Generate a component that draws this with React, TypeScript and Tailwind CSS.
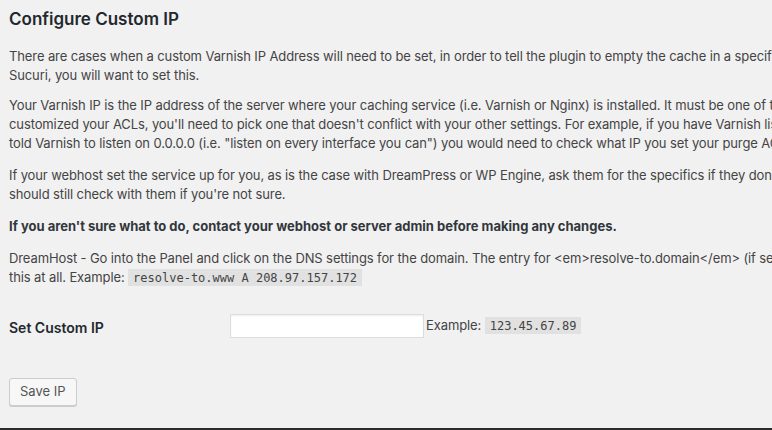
import React from "react";

const Line = ({ children }: { children: React.ReactNode }) => (
  <div className="whitespace-nowrap">{children}</div>
);

export default function App() {
  return (
    <div
      className="h-[430px] w-[772px] overflow-hidden bg-[#f1f1f1] border-b-2 border-[#2b2b2b] text-[13px] leading-[19px] tracking-[-0.11px] text-[#444]"
      style={{ fontFamily: "Inter, 'Noto Sans', Arial, sans-serif" }}
    >
      <div className="pl-[9px] pt-[7px]">
        <h2 className="text-[17px] leading-[24px] font-semibold tracking-normal text-[#23282d] whitespace-nowrap">
          Configure Custom IP
        </h2>

        <div className="mt-[16px] flex flex-col gap-[13px]">
          <div>
            <Line>
              There are cases when a custom Varnish IP Address will need to be set, in order to tell the plugin to empty the cache in a specific location. If you're using a CDN like Cloudflare or a Firewall Proxy like
            </Line>
            <Line>Sucuri, you will want to set this.</Line>
          </div>
          <div className="-mt-[2px]">
            <Line>
              Your Varnish IP is the IP address of the server where your caching service (i.e. Varnish or Nginx) is installed. It must be one of the addresses used by your cache service. If you use multiple IPs, or have
            </Line>
            <Line>
              customized your ACLs, you'll need to pick one that doesn't conflict with your other settings. For example, if you have Varnish listening on a public and private IP, you'll want to pick the private. On the other hand, if you
            </Line>
            <Line>
              told Varnish to listen on 0.0.0.0 (i.e. "listen on every interface you can") you would need to check what IP you set your purge ACL to allow (commonly 127.0.0.1 aka localhost), and use that (i.e. 127.0.0.1 or localhost).
            </Line>
          </div>
          <div>
            <Line>
              If your webhost set the service up for you, as is the case with DreamPress or WP Engine, ask them for the specifics if they don't have it documented. I've listed the ones I know about here, however you
            </Line>
            <Line>should still check with them if you're not sure.</Line>
          </div>
          <div className="font-bold tracking-normal text-[#32373c]">
            <Line>
              If you aren't sure what to do, contact your webhost or server admin before making any changes.
            </Line>
          </div>
          <div>
            <Line>
              DreamHost - Go into the Panel and click on the DNS settings for the domain. The entry for &lt;em&gt;resolve-to.domain&lt;/em&gt; (if set) will your cache server. If it's not set, then you don't need to worry about
            </Line>
            <Line>
              this at all. Example:{" "}
              <code
                className="bg-[#e1e1e1] px-[5px] pt-[2px] pb-[1px] text-[12px] tracking-normal"
                style={{ fontFamily: "'DejaVu Sans Mono', 'Liberation Mono', monospace" }}
              >
                resolve-to.www A 208.97.157.172
              </code>
            </Line>
          </div>
        </div>

        <div className="mt-[26px] flex items-center">
          <div className="w-[221px] pt-[2px] text-[14px] font-semibold tracking-normal text-[#23282d]">Set Custom IP</div>
          <input
            type="text"
            className="h-[24px] w-[194px] bg-white border border-[#dddddd] shadow-[inset_0_1px_2px_rgba(0,0,0,0.07)] outline-none px-[5px]"
          />
          <span className="ml-[2px] whitespace-nowrap">
            Example:{" "}
            <code
              className="bg-[#e1e1e1] px-[5px] pt-[2px] pb-[1px] text-[12px] tracking-normal"
              style={{ fontFamily: "'DejaVu Sans Mono', 'Liberation Mono', monospace" }}
            >
              123.45.67.89
            </code>
          </span>
        </div>

        <div className="mt-[40px]">
          <button className="h-[28px] px-[10px] pb-[1px] rounded-[3px] bg-[#f7f7f7] border border-[#cccccc] shadow-[0_1px_0_#cccccc] text-[13px] tracking-normal text-[#555]">
            Save IP
          </button>
        </div>
      </div>
    </div>
  );
}
